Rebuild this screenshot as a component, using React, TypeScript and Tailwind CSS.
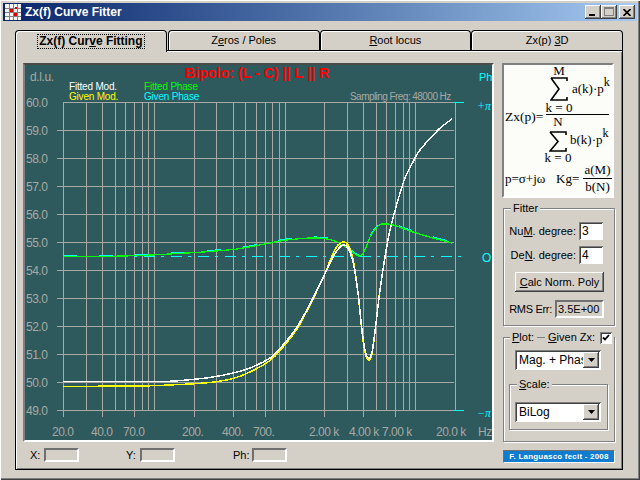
import React from "react";

type P = [number, number];
const smooth = (p: P[]) => {
  let d = `M${p[0][0]} ${p[0][1]}`;
  for (let i = 0; i < p.length - 1; i++) {
    const a = p[Math.max(0, i - 1)], b = p[i], c = p[i + 1], e = p[Math.min(p.length - 1, i + 2)];
    const k = 6;
    d += ` C${(b[0] + (c[0] - a[0]) / k).toFixed(1)} ${(b[1] + (c[1] - a[1]) / k).toFixed(1)} ${(c[0] - (e[0] - b[0]) / k).toFixed(1)} ${(c[1] - (e[1] - b[1]) / k).toFixed(1)} ${c[0]} ${c[1]}`;
  }
  return d;
};

const white: P[] = [[63,381.5],[120,381.5],[165,381.5],[192,379.5],[213,377],[233,373],[250,368],[270,358],[283,345],[297,327],[310,304],[323,278],[333,257],[339,248],[343,245],[348,248],[353,262],[358,293],[362,330],[365,350],[368,358],[372,352],[376,323],[380,290],[385,257],[390,230],[398,200],[405,178],[413,162],[420,150],[438,130],[452,119]];
const yellow: P[] = [[63,386.5],[100,386.5],[101,386],[140,386],[180,384.5],[210,382.5],[233,378.5],[250,372],[270,360.5],[283,347],[297,329],[310,305],[323,278],[332,256],[338,245],[343,242],[348,245],[353,259],[358,293],[362,332],[365,352],[368,360],[372,354],[376,323],[380,290],[385,257],[390,230],[398,200],[405,178],[413,162],[420,150],[438,130],[452,119]];
const green: P[] = [[63,256.5],[100,256.5],[140,255.5],[170,254],[203,252],[237,249],[270,243],[287,240],[310,238],[327,239],[337,242],[347,248],[355,254],[360,256],[365,250],[370,237],[377,227],[382,224],[393,225],[413,232],[433,238],[452,243]];

const freqs = [20,30,40,50,60,70,80,90,100,200,300,400,500,600,700,800,900,1000,2000,3000,4000,5000,6000,7000,8000,9000,10000,20000];
const ticks = [20,40,70,200,400,700,2000,4000,7000];
const fx = (f: number) => Math.round(63 + 130.5 * Math.log10(f / 20));
const rows = ["60.0","59.0","58.0","57.0","56.0","55.0","54.0","53.0","52.0","51.0","50.0","49.0"];
const xl: [string, number][] = [["20.0",52],["40.0",91],["70.0",123],["200.",182],["400.",222],["700.",253],["2.00 k",309],["4.00 k",349],["7.00 k",382],["20.0 k",436],["Hz",478]];
const G = "#a9a9a3";

const raised = "shadow-[inset_-1px_-1px_0_#404040,inset_1px_1px_0_#ffffff,inset_-2px_-2px_0_#808080]";
const sunken = "shadow-[inset_1px_1px_0_#808080,inset_-1px_-1px_0_#ffffff,inset_2px_2px_0_#404040]";
const etched = "relative border border-[#808080] shadow-[1px_1px_0_#ffffff,inset_1px_1px_0_#ffffff]";

function Plot() {
  return (
    <div className="h-[379px] w-[471px] border-2 border-t-[#4a4a4a] border-l-[#808080] border-r-white border-b-white bg-[#2e5a5e]">
      <svg width="467" height="375" viewBox="25 65 467 375" className="block text-[12px]">
        <g stroke={G} strokeWidth="1" shapeRendering="crispEdges">
          {rows.map((_, i) => (
            <line key={i} x1={i === 0 ? 63 : 57} x2="454" y1={102.5 + 28 * i} y2={102.5 + 28 * i} />
          ))}
          {freqs.map((f) => (
            <line key={f} x1={fx(f) + 0.5} x2={fx(f) + 0.5} y1="102" y2={ticks.includes(f) ? 417 : 410} />
          ))}
        </g>
        <g stroke="#00ffff" strokeWidth="1" shapeRendering="crispEdges">
          <line x1="454" x2="464" y1="102.5" y2="102.5" />
          <line x1="454" x2="464" y1="410.5" y2="410.5" />
          <line x1="63" x2="464" y1="256.5" y2="256.5" strokeDasharray="11 6 3 7" />
        </g>
        <path d={smooth(green)} transform="translate(0,-1)" fill="none" stroke="#00ffff" strokeWidth="1.2" shapeRendering="crispEdges" strokeDasharray="14 22" />
        <path d={smooth(green)} fill="none" stroke="#00ff00" strokeWidth="1.3" shapeRendering="crispEdges" />
        <path d={smooth(yellow)} fill="none" stroke="#ffff00" strokeWidth="1.5" shapeRendering="crispEdges" />
        <path d={smooth(white)} fill="none" stroke="#ffffff" strokeWidth="1.5" shapeRendering="crispEdges" />

        {rows.map((r, i) => (
          <text key={r} x="26" y={107 + 28 * i} fill={G} letterSpacing="-0.5">{r}</text>
        ))}
        {xl.map(([t, x]) => (
          <text key={t} x={x} y="436" fill={G} letterSpacing="-0.5">{t}</text>
        ))}
        <text x="30" y="81" fill={G} fontSize="12" letterSpacing="-0.4">d.l.u.</text>
        <text x="185" y="78" fill="#ff0000" fontSize="14" fontWeight="700" letterSpacing="0.1">Bipolo: (L - C) || L || R</text>
        <g fontSize="10" letterSpacing="-0.2">
          <text x="69" y="90" fill="#ffffff">Fitted Mod.</text>
          <text x="69" y="100" fill="#ffff00">Given Mod.</text>
          <text x="144" y="90" fill="#00ff00">Fitted Phase</text>
          <text x="144" y="100" fill="#00ffff">Given Phase</text>
        </g>
        <text x="350" y="100" fill={G} fontSize="10" letterSpacing="-0.55">Sampling Freq: 48000 Hz</text>
        <g fill="#00ffff">
          <text x="479" y="81" fontSize="11">Ph</text>
          <text x="477" y="110" fontFamily="'Liberation Serif',serif" fontStyle="italic" fontSize="12">+π</text>
          <text x="482" y="262">O</text>
          <text x="477" y="417" fontFamily="'Liberation Serif',serif" fontStyle="italic" fontSize="12">−π</text>
        </g>
      </svg>
    </div>
  );
}

const Sigma = ({ h }: { h: number }) => (
  <svg width="18" height={h} viewBox={`0 0 18 ${h}`} className="block">
    <path d={`M1 1H17V4M1 1L9 ${h / 2}L1 ${h - 1}H17V${h - 4}`} fill="none" stroke="#000" strokeWidth="1.6" />
  </svg>
);

function Formula() {
  return (
    <div className="h-[135px] w-[112px] border-2 border-t-[#808080] border-l-[#808080] border-r-white border-b-white bg-[#fcfcf9] font-['Liberation_Serif',serif] text-[13px] leading-[12px] text-black">
      <div className="flex items-center pl-[1px]">
        <div className="mt-[4px] w-[41px] shrink-0 text-[13.5px]">Zx(p)=</div>
        <div className="w-[63px]">
          <div className="flex border-b border-black">
            <div className="flex w-[26px] flex-col items-center">
              <span>M</span>
              <span className="mt-[0px]"><Sigma h={24} /></span>
              <span className="mt-[1px] whitespace-nowrap">k = 0</span>
            </div>
            <div className="flex pt-[18px] whitespace-nowrap">
              <span>a(k)·p</span><span className="relative top-[-7px] text-[12px]">k</span>
            </div>
          </div>
          <div className="flex pt-[1px]">
            <div className="flex w-[24px] flex-col items-center">
              <span>N</span>
              <span className="mt-[3px]"><Sigma h={21} /></span>
              <span className="whitespace-nowrap">k = 0</span>
            </div>
            <div className="flex pt-[18px] whitespace-nowrap">
              <span>b(k)·p</span><span className="relative top-[-7px] text-[12px]">k</span>
            </div>
          </div>
        </div>
      </div>
      <div className="flex items-center pl-[1px] whitespace-nowrap">
        <span className="w-[51px]">p=σ+jω</span>
        <span className="w-[27px]">Kg=</span>
        <span className="flex w-[29px] flex-col items-center">
          <span className="w-full border-b border-black pb-[2px] text-center">a(M)</span>
          <span className="pt-[2px]">b(N)</span>
        </span>
      </div>
    </div>
  );
}

const Arrow = () => (
  <span className={`flex h-[16px] w-[16px] shrink-0 items-center justify-center bg-[#d4d0c8] ${raised}`}>
    <svg width="7" height="4" viewBox="0 0 7 4"><path d="M0 0H7L3.5 4Z" fill="#000" /></svg>
  </span>
);

function Select({ v }: { v: string }) {
  return (
    <div className={`flex h-[20px] w-[86px] items-center overflow-hidden bg-white p-[2px] text-[12px] ${sunken}`}>
      <span className="min-w-0 flex-1 overflow-hidden whitespace-nowrap pl-[2px]">{v}</span>
      <Arrow />
    </div>
  );
}

const Input = ({ v }: { v: string }) => (
  <div className={`flex h-[18px] w-[24px] items-center bg-white pl-[3px] text-[12px] ${sunken}`}>{v}</div>
);

const Field = () => (
  <div className="h-[14px] w-[35px] border-2 border-t-[#707070] border-l-[#707070] border-r-white border-b-white" />
);

function Tab({ children, active, w }: { children: React.ReactNode; active?: boolean; w: string }) {
  return (
    <div
      className={`${w} flex items-center justify-center whitespace-nowrap rounded-t-[4px] border-x border-t border-black bg-[#d4d0c8] shadow-[inset_1px_1px_0_#ffffff] ${
        active ? "relative z-10 h-[22px] pb-[1px] text-[12px] font-bold" : "h-[20px]"
      }`}
    >
      {active ? <span className="border border-dotted border-black px-[1px] leading-[13px]">{children}</span> : <span>{children}</span>}
    </div>
  );
}

export default function App() {
  return (
    <div className="flex h-[480px] w-[640px] flex-col overflow-hidden bg-[#d4d0c8] bg-[radial-gradient(#c7c3bb_0.6px,transparent_0.7px)] bg-[length:4px_4px] p-[3px] font-['Liberation_Sans',sans-serif] text-[11px] text-black shadow-[inset_1px_1px_0_#ffffff,inset_-1px_-1px_0_#404040,inset_-2px_-2px_0_#808080]">
      <div className="flex h-[18px] shrink-0 items-center bg-gradient-to-r from-[#0a246a] to-[#a6caf0] pl-[2px] pr-[2px] text-white">
        <svg width="16" height="16" viewBox="0 0 16 16" className="mr-[4px] shrink-0">
          <rect width="16" height="16" fill="#f4f4f4" />
          <path d="M0 4.5H16M0 8.5H16M0 12.5H16M4.5 0V16M8.5 0V16M12.5 0V16" stroke="#808080" />
          <rect x="5" y="5" width="3" height="3" fill="#e00000" />
          <rect x="9" y="9" width="3" height="3" fill="#e00000" />
          <rect x="10" y="3" width="2" height="2" fill="#e00000" />
        </svg>
        <span className="flex-1 text-[12px] font-bold">Zx(f) Curve Fitter</span>
        <div className={`flex h-[14px] w-[16px] items-end bg-[#d4d0c8] pb-[3px] pl-[4px] ${raised}`}><div className="h-[2px] w-[6px] bg-black" /></div>
        <div className={`flex h-[14px] w-[16px] items-center justify-center bg-[#d4d0c8] ${raised}`}><div className="mb-[1px] h-[9px] w-[10px] border border-t-2 border-[#808080]" /></div>
        <div className={`ml-[2px] flex h-[14px] w-[16px] items-center justify-center bg-[#d4d0c8] ${raised}`}>
          <svg width="8" height="7" viewBox="0 0 8 7"><path d="M0.5 0L7.5 7M7.5 0L0.5 7" stroke="#000" strokeWidth="1.6" /></svg>
        </div>
      </div>

      <div className="flex min-h-0 flex-1 flex-col pb-[7px] pl-[12px] pr-[14px] pt-[9px]">
        <div className="flex h-[20px] shrink-0 items-start">
          <Tab active w="w-[152px]">Zx(f) Cur<u>v</u>e Fitting</Tab>
          <div className="w-[1px]" />
          <Tab w="w-[152px]">Z<u>e</u>ros / Poles</Tab>
          <Tab w="w-[152px]"><u>R</u>oot locus</Tab>
          <Tab w="w-[152px]">Zx(p) <u>3</u>D</Tab>
        </div>

        <div className="flex min-h-0 flex-1 border border-black pl-[7px] pt-[12px] shadow-[inset_1px_1px_0_#ffffff,inset_-1px_-1px_0_#808080]">
          <div className="w-[471px] shrink-0">
            <Plot />
            <div className="mt-[5px] flex items-center pl-[7px]">
              <span className="w-[14px]">X:</span><Field />
              <span className="ml-[47px] w-[14px]">Y:</span><Field />
              <span className="ml-[58px] w-[19px]">Ph:</span><Field />
            </div>
          </div>

          <div className="ml-[8px] w-[113px] shrink-0">
            <Formula />

            <div className={`ml-[1px] mt-[10px] h-[118px] w-[112px] ${etched} pt-[13px]`}>
              <span className="absolute left-[7px] top-[-7px] bg-[#d4d0c8] px-[2px] leading-[13px]">Fitter</span>
              <div className="flex items-center justify-end gap-[3px] whitespace-nowrap pr-[11px]"><span>Nu<u>M</u>. degree:</span><Input v="3" /></div>
              <div className="mt-[6px] flex items-center justify-end gap-[3px] whitespace-nowrap pr-[11px]"><span>De<u>N</u>. degree:</span><Input v="4" /></div>
              <div className={`ml-[11px] mt-[8px] flex h-[20px] w-[89px] items-center justify-center whitespace-nowrap bg-[#d4d0c8] ${raised}`}><span><u>C</u>alc Norm. Poly</span></div>
              <div className="mt-[8px] flex items-center justify-end gap-[3px] whitespace-nowrap pr-[10px]">
                <span className="tracking-[-0.3px]">RMS Err:</span>
                <div className="flex h-[18px] w-[49px] items-center border-2 border-t-[#707070] border-l-[#707070] border-r-white border-b-white pl-[1px] text-[11px]">3.5E+00</div>
              </div>
            </div>

            <div className={`ml-[1px] mt-[11px] h-[105px] w-[112px] ${etched} pl-[11px] pt-[12px]`}>
              <div className="absolute left-[6px] top-[-7px] flex items-center whitespace-nowrap bg-[#d4d0c8] px-[2px] leading-[13px]">
                <span><u>P</u>lot:</span><span className="mx-[3px] h-[1px] w-[8px] bg-[#808080]" /><span><u>G</u>iven Zx:</span>
                <span className={`ml-[5px] flex h-[12px] w-[12px] items-center justify-center bg-white ${sunken}`}>
                  <svg width="8" height="7" viewBox="0 0 8 7"><path d="M1 3.5L3 5.5L7 1" fill="none" stroke="#000" strokeWidth="1.8" /></svg>
                </span>
              </div>
              <Select v="Mag. + Phase" />
              <div className={`ml-[-6px] mt-[14px] h-[46px] w-[99px] ${etched} pl-[5px] pt-[17px]`}>
                <span className="absolute left-[7px] top-[-7px] bg-[#d4d0c8] px-[2px] leading-[13px]"><u>S</u>cale:</span>
                <Select v="BiLog" />
              </div>
            </div>

            <div className="ml-[1px] mt-[8px] flex h-[13px] w-[112px] items-center justify-center whitespace-nowrap border border-t-[#707070] border-l-[#707070] border-r-white border-b-white bg-[#0f7ccf] text-[8px] font-bold tracking-[0.2px] text-white">F. Languasco fecit - 2008</div>
          </div>
        </div>
      </div>
    </div>
  );
}
